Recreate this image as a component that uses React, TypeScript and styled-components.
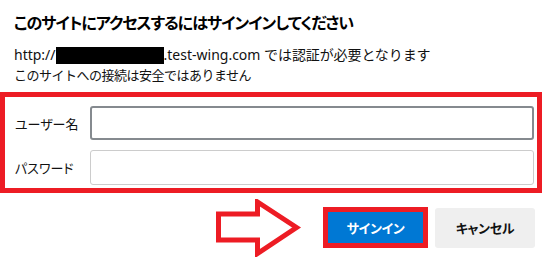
import React from 'react'
import styled, { createGlobalStyle } from 'styled-components'

const GlobalStyle = createGlobalStyle`
  html, body {
    margin: 0;
    padding: 0;
    background: #ffffff;
  }
  body {
    font-family: 'Noto Sans', 'Noto Sans CJK JP', sans-serif;
    color: #111111;
    font-feature-settings: 'palt';
  }
`

const RED = '#ed1c24'

const Dialog = styled.div`
  width: 550px;
  height: 264px;
  box-sizing: border-box;
  padding-top: 11px;
  overflow: hidden;
`

const Title = styled.h1`
  margin: 0 0 0 14px;
  font-size: 16px;
  letter-spacing: -1px;
  font-weight: 700;
  line-height: 24px;
  color: #000000;
`

const Message = styled.p`
  margin: 10px 0 0 14px;
  font-size: 14px;
  line-height: 20px;
`

// Japanese runs of the message: full-width glyphs, slightly tightened
const Jp = styled.span<{ $size?: number }>`
  font-size: ${(p) => p.$size ?? 13}px;
  letter-spacing: ${(p) => (p.$size ? -0.1 : -0.5)}px;
  font-feature-settings: normal;
`

const Redacted = styled.span`
  display: inline-block;
  width: 108px;
  height: 17px;
  background: #000000;
  vertical-align: -4px;
`

const Highlight = styled.div`
  margin-top: 7px;
  width: 542px;
  box-sizing: border-box;
  border: 5px solid ${RED};
  padding: 9px 3px 3px 10px;
  display: flex;
  flex-direction: column;
  gap: 10px;
`

const Row = styled.div`
  display: flex;
  align-items: center;
`

const Label = styled.label`
  width: 75px;
  font-size: 13px;
`

const Field = styled.input<{ $focused?: boolean }>`
  flex: 1;
  box-sizing: border-box;
  height: ${(p) => (p.$focused ? 34 : 35)}px;
  border: ${(p) => (p.$focused ? '2px solid #858a8f' : '1px solid #cccccc')};
  border-radius: 3px;
  background: #ffffff;
  outline: none;
  margin: 0;
`

const Footer = styled.div`
  margin-top: 6px;
  height: 57px;
  display: flex;
  align-items: center;
  justify-content: flex-end;
  padding-right: 15px;
`

const Arrow = styled.svg`
  width: 86px;
  height: 58px;
  margin-right: 21px;
`

const SignInFrame = styled.div`
  width: 105px;
  height: 41px;
  box-sizing: border-box;
  border: 5px solid ${RED};
  margin-right: 7px;
  margin-top: -1px;
`

const Button = styled.button<{ $primary?: boolean }>`
  box-sizing: border-box;
  border: none;
  margin: 0;
  padding: 0;
  font-family: inherit;
  font-feature-settings: 'palt';
  font-size: 13px;
  letter-spacing: -0.3px;
  font-weight: 700;
  color: ${(p) => (p.$primary ? '#ffffff' : '#111111')};
  background: ${(p) => (p.$primary ? '#0078d4' : '#efefef')};
  border-radius: ${(p) => (p.$primary ? 0 : 3)}px;
  width: ${(p) => (p.$primary ? 95 : 100)}px;
  height: ${(p) => (p.$primary ? 31 : 40)}px;
  display: flex;
  align-items: center;
  justify-content: center;
`

export default function App() {
  return (
    <>
      <GlobalStyle />
      <Dialog>
        <Title>このサイトにアクセスするにはサインインしてください</Title>
        <Message>
          http://<Redacted />.test-wing.com <Jp $size={14}>では認証が必要となります</Jp>
          <br />
          <Jp>このサイトへの接続は安全ではありません</Jp>
        </Message>
        <Highlight>
          <Row>
            <Label>ユーザー名</Label>
            <Field $focused />
          </Row>
          <Row>
            <Label>パスワード</Label>
            <Field type="password" />
          </Row>
        </Highlight>
        <Footer>
          <Arrow viewBox="0 0 86 58">
            <polygon
              points="2.5,15 41.5,15 41.5,3 80.5,28.5 41.5,54.5 41.5,41 2.5,41"
              fill="#ffffff"
              stroke={RED}
              strokeWidth="5"
            />
          </Arrow>
          <SignInFrame>
            <Button $primary>サインイン</Button>
          </SignInFrame>
          <Button>キャンセル</Button>
        </Footer>
      </Dialog>
    </>
  )
}
